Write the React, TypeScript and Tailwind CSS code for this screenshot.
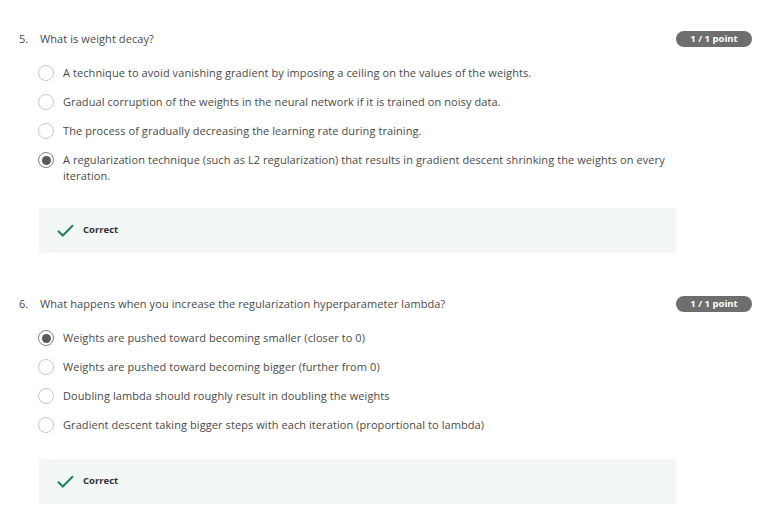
import React from "react";

type Q = {
  n: string;
  text: string;
  options: string[];
  selected: number;
};

const questions: Q[] = [
  {
    n: "5.",
    text: "What is weight decay?",
    options: [
      "A technique to avoid vanishing gradient by imposing a ceiling on the values of the weights.",
      "Gradual corruption of the weights in the neural network if it is trained on noisy data.",
      "The process of gradually decreasing the learning rate during training.",
      "A regularization technique (such as L2 regularization) that results in gradient descent shrinking the weights on every iteration.",
    ],
    selected: 3,
  },
  {
    n: "6.",
    text: "What happens when you increase the regularization hyperparameter lambda?",
    options: [
      "Weights are pushed toward becoming smaller (closer to 0)",
      "Weights are pushed toward becoming bigger (further from 0)",
      "Doubling lambda should roughly result in doubling the weights",
      "Gradient descent taking bigger steps with each iteration (proportional to lambda)",
    ],
    selected: 0,
  },
];

function Radio({ on }: { on: boolean }) {
  return on ? (
    <div className="w-[16px] h-[16px] shrink-0 rounded-full border-[1.5px] border-[#808080] flex items-center justify-center">
      <div className="w-[9px] h-[9px] rounded-full bg-[#5a5a5a]" />
    </div>
  ) : (
    <div className="w-[16px] h-[16px] shrink-0 rounded-full border-[1.5px] border-[#c8c8c8] bg-white" />
  );
}

function Check() {
  return (
    <svg width="17" height="13" viewBox="0 0 17 13" className="shrink-0">
      <path d="M1 6.8 L5.8 11.5 L16 1.2" fill="none" stroke="#1f8354" strokeWidth="2" />
    </svg>
  );
}

function Question({ q, last }: { q: Q; last: boolean }) {
  return (
    <div className={last ? "" : "mb-[43px]"}>
      <div className="flex items-center justify-between h-[16px]">
        <div className="flex items-center text-[11px] tracking-[0.08px] leading-[16px] text-[#4a4a4a]">
          <span className="w-[21px]">{q.n}</span>
          <span>{q.text}</span>
        </div>
        <div className="w-[76px] h-[16px] rounded-full bg-[#6e6e6e] text-white text-[9.5px] font-bold flex items-center justify-center leading-none">
          1 / 1 point
        </div>
      </div>
      <div className="ml-[19px] mt-[18px] flex flex-col gap-[13px]">
        {q.options.map((o, i) => (
          <div key={i} className="flex items-start gap-[9px]">
            <Radio on={i === q.selected} />
            <span className="max-w-[610px] text-[11px] tracking-[0.08px] leading-[16px] text-[#4a4a4a]">{o}</span>
          </div>
        ))}
      </div>
      <div
        className={
          "ml-[20px] w-[637px] h-[45px] bg-[#f2f7f5] flex items-center pl-[18px] gap-[9px] " +
          (last ? "mt-[26px]" : "mt-[24px]")
        }
      >
        <Check />
        <span className="text-[9.5px] font-bold text-[#333333]">Correct</span>
      </div>
    </div>
  );
}

export default function App() {
  return (
    <div
      className="w-[769px] h-[523px] bg-white pt-[31px] pl-[19px] pr-[17px] overflow-hidden"
      style={{ fontFamily: '"Open Sans", sans-serif' }}
    >
      {questions.map((q, i) => (
        <Question key={i} q={q} last={i === questions.length - 1} />
      ))}
    </div>
  );
}
